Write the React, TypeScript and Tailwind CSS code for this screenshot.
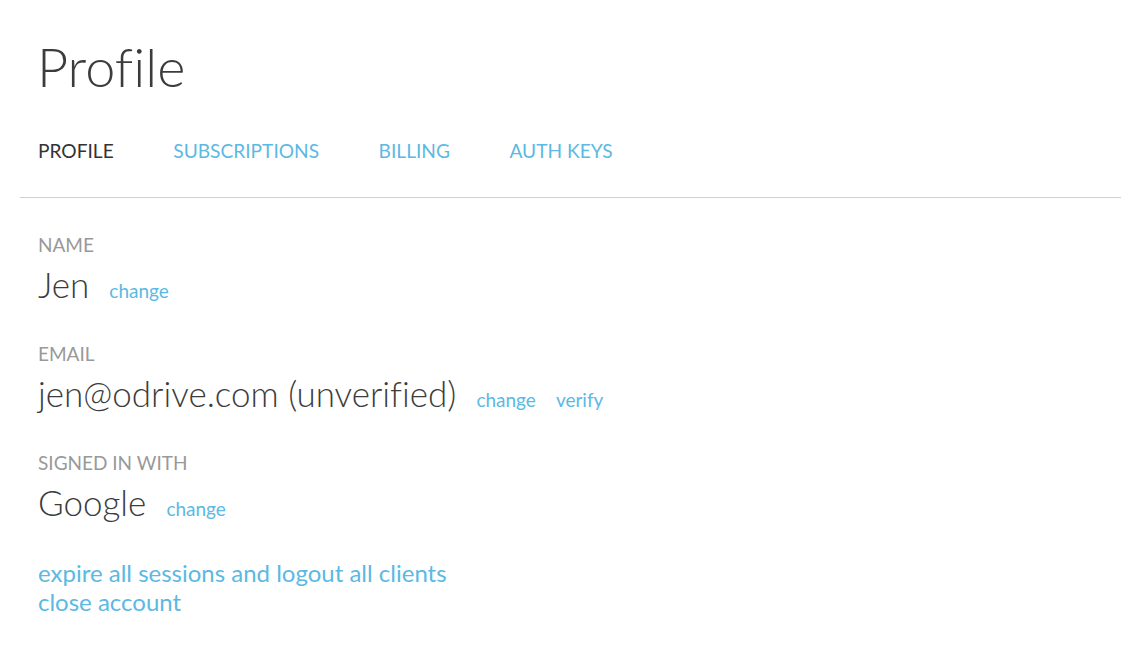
export default function App() {
  const tabs = ["PROFILE", "SUBSCRIPTIONS", "BILLING", "AUTH KEYS"]
  const light = "font-['Lato_Light','Lato',sans-serif] font-light text-[#3c3c3c] [font-variant-ligatures:none]"

  return (
    <div className="min-h-screen bg-white px-[20px] pr-[18px] font-['Lato','Open_Sans',sans-serif] text-[#333]">
      <h1 className={`pl-[17px] pt-[35px] text-[54px] leading-[64px] ${light}`}>Profile</h1>

      <div className="mt-[40px] flex gap-[59.5px] pl-[18px] pb-[35px] text-[19.15px] leading-[23px]">
        {tabs.map((tab, i) => (
          <span key={tab} className={i === 0 ? "text-[#333]" : "text-[#5bb9e3]"}>
            {tab}
          </span>
        ))}
      </div>

      <div className="border-t border-[#d0d0d0]" />

      <div className="pl-[18px] pt-[35px]">
        <div>
          <div className="text-[19px] leading-[23px] text-[#999]">NAME</div>
          <div className="mt-[6px] flex items-baseline gap-[20px]">
            <span className={`text-[35px] leading-[44px] ${light}`}>Jen</span>
            <span className="text-[19px] text-[#5bb9e3]">change</span>
          </div>
        </div>

        <div className="mt-[36px]">
          <div className="text-[19px] leading-[23px] text-[#999]">EMAIL</div>
          <div className="mt-[6px] flex items-baseline gap-[20px]">
            <span className={`text-[35px] leading-[44px] ${light}`}>jen@odrive.com (unverified)</span>
            <span className="text-[19px] text-[#5bb9e3]">change</span>
            <span className="text-[19px] text-[#5bb9e3]">verify</span>
          </div>
        </div>

        <div className="mt-[36px]">
          <div className="text-[19px] leading-[23px] text-[#999]">SIGNED IN WITH</div>
          <div className="mt-[6px] flex items-baseline gap-[20px]">
            <span className={`text-[35px] leading-[44px] ${light}`}>Google</span>
            <span className="text-[19px] text-[#5bb9e3]">change</span>
          </div>
        </div>

        <div className="mt-[34px] text-[24px] leading-[29px] text-[#5bb9e3]">
          <div>expire all sessions and logout all clients</div>
          <div>close account</div>
        </div>
      </div>
    </div>
  )
}
